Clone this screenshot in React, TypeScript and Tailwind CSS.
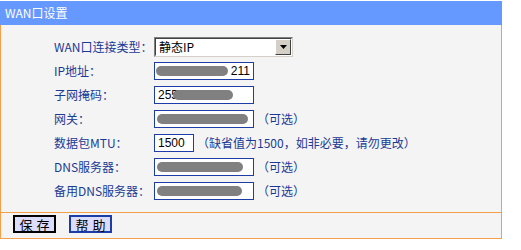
import React from "react";

const font = { fontFamily: '"Noto Sans CJK SC", "Liberation Sans", sans-serif' };

function Blob({ left, width }: { left: number; width: number }) {
  return (
    <span
      className="absolute top-[3px] h-[10px] rounded-full bg-[#808080]"
      style={{ left, width }}
    />
  );
}

function TextBox({
  width = 100,
  text = "",
  right = "",
  blobs = [] as { left: number; width: number }[],
}: {
  width?: number;
  text?: string;
  right?: string;
  blobs?: { left: number; width: number }[];
}) {
  return (
    <div
      className="relative flex h-[18px] border border-[#1c3ca8] bg-white text-[12px] leading-[16px] text-black pl-[3px] pr-[3px] font-['Liberation_Sans',sans-serif] overflow-hidden"
      style={{ width }}
    >
      <span>{text}</span>
      <span className="flex-1" />
      <span>{right}</span>
      {blobs.map((b, i) => (
        <Blob key={i} left={b.left} width={b.width} />
      ))}
    </div>
  );
}

function Row({ label, children }: { label: string; children: React.ReactNode }) {
  return (
    <div className="flex h-[24px] items-center">
      <div className="w-[100px] pl-[53px] box-content shrink-0 whitespace-nowrap text-[12px] text-[#1a3a94]">{label}</div>
      <div className="flex items-center">{children}</div>
    </div>
  );
}

const Note = ({ children }: { children: React.ReactNode }) => (
  <span className="ml-[3px] whitespace-nowrap text-[12px] text-[#1a3a94]">{children}</span>
);

export default function App() {
  return (
    <div className="h-[250px] w-[521px] bg-white" style={font}>
      <div className="w-[502px] pt-[1px]">
        <div className="flex h-[24px] items-center bg-[#6699ff] pl-[5px] text-[12px] text-white">WAN口设置</div>
        <div className="border-x border-[#f4a04a] bg-[#f4f4f4] pt-[10px] pb-[9px]">
          <Row label="WAN口连接类型：">
            <div className="flex h-[20px] w-[139px] items-center border border-t-[#808080] border-l-[#808080] border-r-[#d4d0c8] border-b-[#d4d0c8] bg-white">
              <div className="flex h-full flex-1 items-center border border-t-[#404040] border-l-[#404040] border-r-white border-b-white pl-[3px] text-[12px] text-black">
                <span>静态IP</span>
                <span className="flex-1" />
                <span className="flex h-[16px] w-[16px] items-center justify-center border border-t-white border-l-white border-r-[#404040] border-b-[#404040] bg-[#d4d0c8]">
                  <svg width="7" height="4" viewBox="0 0 7 4">
                    <path d="M0 0H7L3.5 4Z" fill="#000" />
                  </svg>
                </span>
              </div>
            </div>
          </Row>
          <Row label="IP地址：">
            <TextBox right="211" blobs={[{ left: 1, width: 72 }]} />
          </Row>
          <Row label="子网掩码：">
            <TextBox text="255" blobs={[{ left: 18, width: 60 }]} />
          </Row>
          <Row label="网关：">
            <TextBox blobs={[{ left: 2, width: 91 }]} />
            <Note>（可选）</Note>
          </Row>
          <Row label="数据包MTU：">
            <TextBox width={40} text="1500" />
            <Note>（缺省值为1500，如非必要，请勿更改）</Note>
          </Row>
          <Row label="DNS服务器：">
            <TextBox blobs={[{ left: 2, width: 86 }]} />
            <Note>（可选）</Note>
          </Row>
          <Row label="备用DNS服务器：">
            <TextBox blobs={[{ left: 2, width: 85 }]} />
            <Note>（可选）</Note>
          </Row>
        </div>
        <div className="flex h-[27px] gap-[13px] border border-[#f4a04a] bg-[#f4f4f4] pl-[12px] pt-[2px]">
          <button className="h-[18px] w-[43px] border-2 border-black bg-[#dcdcfc] pl-[4px] text-[13px] leading-[13px] tracking-[4px] text-black">保存</button>
          <button className="h-[18px] w-[43px] border-2 border-[#1c3ca8] bg-[#dcdcfc] pl-[4px] text-[13px] leading-[13px] tracking-[4px] text-black">帮助</button>
        </div>
      </div>
    </div>
  );
}
